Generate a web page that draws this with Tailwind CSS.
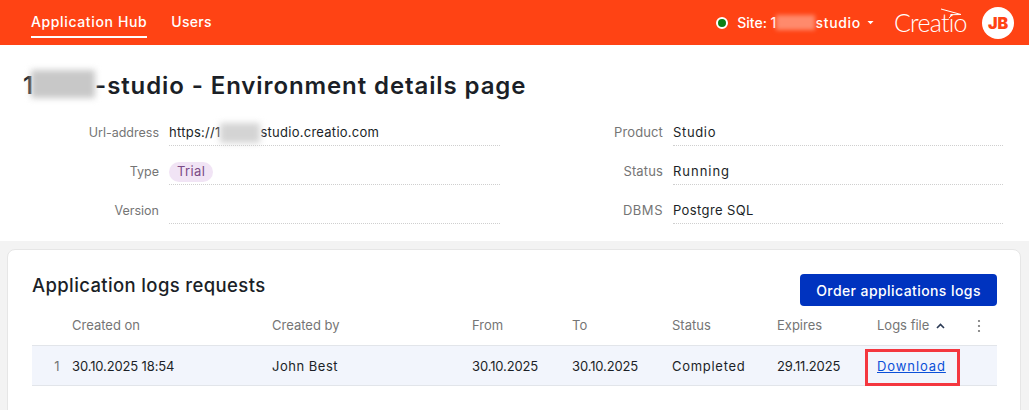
<!DOCTYPE html>
<html><head><meta charset="utf-8"><script src="https://cdn.jsdelivr.net/npm/@tailwindcss/browser@4"></script></head>
<body class="m-0 w-[1029px] h-[410px] overflow-hidden bg-[#f3f3f3] font-['Inter',sans-serif] text-[13px] tracking-[0.03em] text-[#1b1f27]">
<header class="h-[45px] bg-[#ff4314] flex items-stretch text-white">
  <nav class="flex pl-[31px] gap-[24px] text-[14px] font-medium tracking-[0.045em]">
    <a class="h-[38px] flex items-center border-b-2 border-white pt-[6px]">Application Hub</a>
    <a class="h-[38px] flex items-center pt-[6px] border-b-2 border-transparent tracking-[0.02em]">Users</a>
  </nav>
  <div class="ml-auto flex items-center pr-[15px]">
    <span class="w-[12px] h-[12px] rounded-full bg-[#0b7f16] border-2 border-white"></span>
    <span class="ml-[9px] text-[14px] font-medium tracking-normal flex items-center">Site: 1<span class="w-[39px] h-[15px] bg-[#ff8a6c] blur-[2px]"></span><span class="tracking-[0.05em]">studio</span></span>
    <svg class="ml-[6px]" width="7" height="5" viewBox="0 0 8 5"><path d="M0.5 0.8h7L4 4.4z" fill="#fff"/></svg>
    <span class="relative ml-[20px] w-[72px] h-[24px] flex items-center">
      <span class="font-['Lato',sans-serif] font-light text-[25px] tracking-[-0.03em] leading-none">Creatio</span>
      <svg class="absolute left-[46px] top-[-3px]" width="22" height="11" viewBox="0 0 22 11" fill="none"><path d="M1 1l20 5.5-9 0.2-3 3.5" stroke="#fff" stroke-width="1"/></svg>
    </span>
    <span class="ml-[16px] w-[32px] h-[32px] rounded-full bg-white text-[#ff4314] flex items-center justify-center text-[16px] font-black tracking-normal">JB</span>
  </div>
</header>
<section class="bg-white h-[196px] px-[22px]">
  <h1 class="pt-[26px] h-[62px] text-[24px] leading-[29px] font-semibold tracking-[0.0375em] flex items-start text-[#1b1f27] pl-[1px]">1<span class="w-[64px] h-[28px] bg-[#c8c8c8] blur-[3px] shrink-0 -mt-[1px] -ml-[3px]"></span><span>-studio - Environment details page</span></h1>
  <div class="grid grid-cols-[478px_477px] gap-x-[26px] [&>div]:h-[39px] [&>div]:grid [&>div]:grid-cols-[137px_1fr] [&>div]:gap-x-[10px]">
    <div><span class="self-center text-right text-[#757575] pt-[13px] text-[12.5px] tracking-normal">Url-address</span><span class="flex items-center border-b border-dotted border-[#cfcfcf] pt-[13px] tracking-[0.02em]">https://1<span class="w-[40px] h-[20px] bg-[#d4d4d4] blur-[3px]"></span>studio.creatio.com</span></div>
    <div><span class="self-center text-right text-[#757575] pt-[13px] text-[13px] tracking-[0.01em]">Product</span><span class="flex items-center border-b border-dotted border-[#cfcfcf] pt-[13px] tracking-[0.05em]">Studio</span></div>
    <div><span class="self-center text-right text-[#757575] pt-[13px] text-[12.5px] tracking-normal">Type</span><span class="flex items-center border-b border-dotted border-[#cfcfcf] pt-[13px]"><span class="h-[20px] px-[8px] rounded-full bg-[#f1e4f5] text-[#7b4b86] flex items-center">Trial</span></span></div>
    <div><span class="self-center text-right text-[#757575] pt-[13px] text-[13px] tracking-[0.01em]">Status</span><span class="flex items-center border-b border-dotted border-[#cfcfcf] pt-[13px] tracking-[0.075em]">Running</span></div>
    <div><span class="self-center text-right text-[#757575] pt-[13px] text-[12.5px] tracking-normal">Version</span><span class="flex items-center border-b border-dotted border-[#cfcfcf] pt-[13px]"></span></div>
    <div><span class="self-center text-right text-[#757575] pt-[13px] text-[13px] tracking-[0.04em]">DBMS</span><span class="flex items-center border-b border-dotted border-[#cfcfcf] pt-[13px]">Postgre SQL</span></div>
  </div>
</section>
<section class="ml-[7px] mr-[8px] mt-[8px] h-[170px] bg-white rounded-[8px] border border-[#e6e6e6] pl-[24px] pr-[23px] pt-[24px]">
  <div class="flex items-center justify-between h-[32px]">
    <h2 class="text-[18.5px] font-medium tracking-[0.02em] pb-[8px]">Application logs requests</h2>
    <button class="w-[197px] h-[32px] bg-[#0033bf] rounded-[4px] text-white text-[14px] font-medium tracking-[0.03em]">Order applications logs</button>
  </div>
  <div class="grid grid-cols-[40px_200px_200px_100px_100px_105px_100px_100px_20px] w-[965px] h-[39px] items-center text-[#757575] tracking-normal">
    <span></span><span>Created on</span><span>Created by</span><span>From</span><span>To</span><span>Status</span><span>Expires</span>
    <span class="flex items-center gap-[7px]">Logs file <svg width="9" height="6" viewBox="0 0 9 6" fill="none"><path d="M1 5l3.5-3.5L8 5" stroke="#2b3a55" stroke-width="1.6"/></svg></span>
    <svg width="4" height="14" viewBox="0 0 4 14" fill="#757575"><circle cx="2" cy="2" r="1.1"/><circle cx="2" cy="7" r="1.1"/><circle cx="2" cy="12" r="1.1"/></svg>
  </div>
  <div class="grid grid-cols-[40px_200px_200px_100px_100px_105px_100px_100px_20px] w-[965px] h-[41px] items-center bg-[#f2f5fc] border-y border-[#e2e5ea] pt-[2px]">
    <span class="text-right pr-[12px] text-[#757575]">1</span><span class="tracking-[-0.01em]">30.10.2025 18:54</span><span class="tracking-[0.04em]">John Best</span><span class="tracking-[-0.01em]">30.10.2025</span><span class="tracking-[-0.01em]">30.10.2025</span><span class="tracking-[0.055em]">Completed</span><span class="tracking-[-0.01em]">29.11.2025</span>
    <span class="relative"><a class="text-[#0b50d8] underline tracking-[0.07em]">Download</a><span class="absolute left-[-12px] top-[-8px] w-[95px] h-[37px] border-[3px] border-[#f4373f]"></span></span><span></span>
  </div>
</section>
</body></html>
